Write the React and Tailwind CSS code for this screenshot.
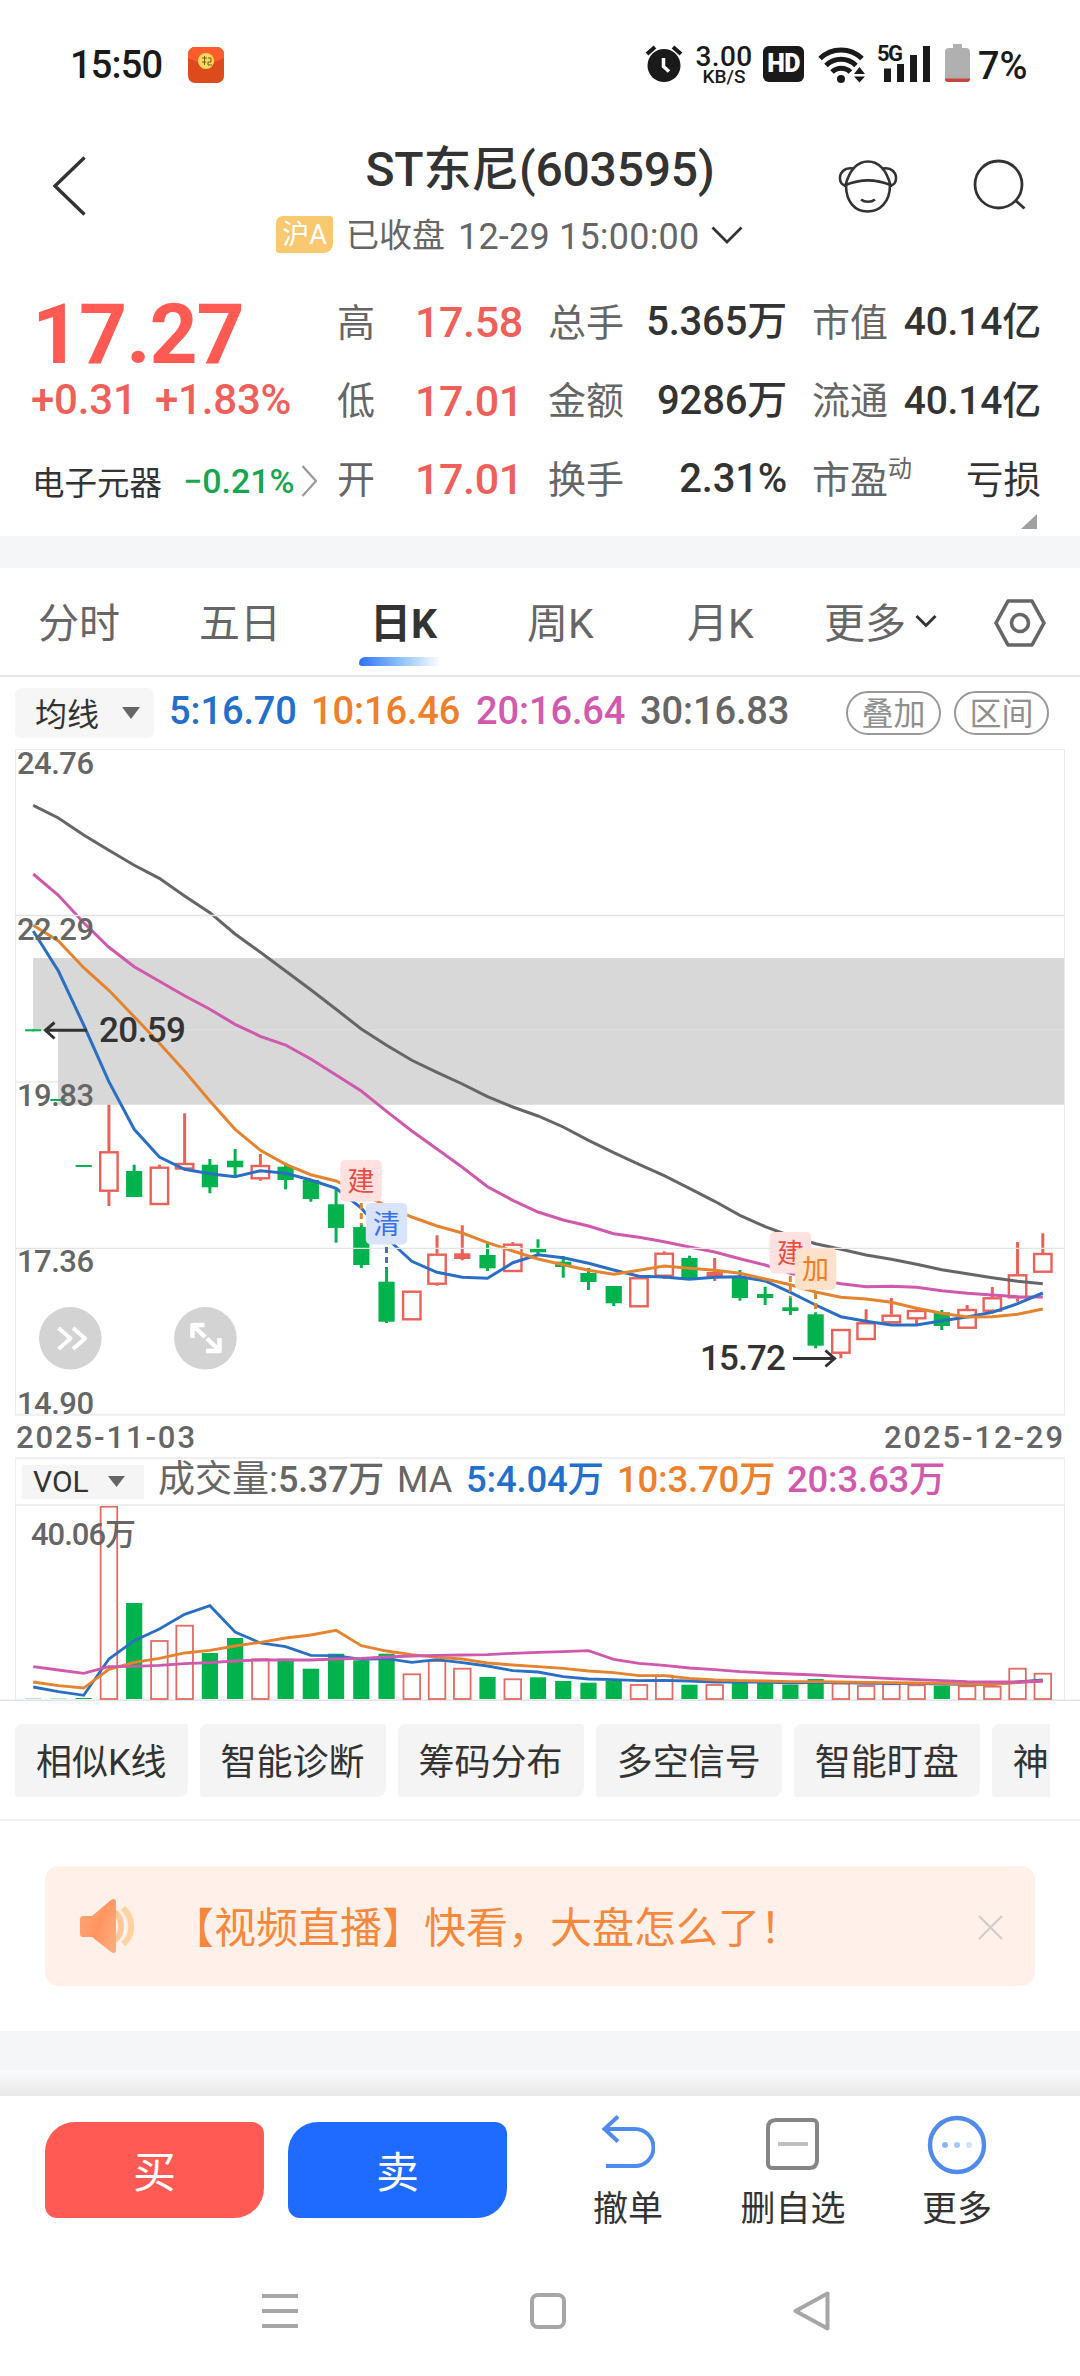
import React from 'react';

const FIRST_X = 33.2;
const STEP = 25.24;
const xAt = (i) => FIRST_X + i * STEP;

// [type, high, bodyTop, bodyBottom, low] - u: hollow red, f: solid red, d: green
const candles = [
  ['d', 1029.3, 1029.3, 1031.3, 1031.3],
  ['d', 1099, 1099, 1101, 1101],
  ['d', 1165, 1165, 1167, 1167],
  ['u', 1104.7, 1151.3, 1191.7, 1206],
  ['d', 1164.7, 1171, 1197, 1197],
  ['u', 1164.7, 1166.7, 1205, 1205],
  ['u', 1113.3, 1163, 1169.5, 1169.5],
  ['d', 1159, 1164.7, 1187.3, 1193.3],
  ['d', 1149, 1160.7, 1167.3, 1176.7],
  ['u', 1154, 1165, 1179.3, 1180.7],
  ['d', 1162.7, 1166.7, 1180, 1189.3],
  ['d', 1180, 1180, 1199, 1201.7],
  ['d', 1189.3, 1204.3, 1228, 1242.7],
  ['d', 1225, 1227, 1265, 1268],
  ['d', 1267.7, 1281.7, 1321.7, 1323],
  ['u', 1290.7, 1290.7, 1320.3, 1320.3],
  ['u', 1235.3, 1253.7, 1284.7, 1285.7],
  ['f', 1225.3, 1253.3, 1259, 1260.3],
  ['d', 1241.7, 1255, 1268.3, 1271],
  ['u', 1242, 1243.7, 1272, 1272],
  ['d', 1239.3, 1249, 1252.3, 1255],
  ['d', 1256, 1261.7, 1267, 1277.7],
  ['d', 1268, 1273, 1282, 1290],
  ['d', 1286, 1286, 1303.3, 1306],
  ['u', 1277.3, 1277.3, 1307.3, 1307.3],
  ['u', 1251.3, 1252.7, 1276.7, 1279],
  ['d', 1255.7, 1258, 1279, 1279],
  ['f', 1258, 1272, 1277, 1281],
  ['d', 1270, 1276.7, 1298, 1300.7],
  ['d', 1286.7, 1294, 1298, 1305],
  ['d', 1297.3, 1307.3, 1311, 1315],
  ['d', 1312.3, 1314.3, 1345.7, 1348.3],
  ['u', 1329, 1329, 1353.7, 1358.3],
  ['u', 1309.3, 1322.3, 1340, 1340],
  ['u', 1298, 1314.7, 1323.3, 1323.3],
  ['u', 1309, 1310, 1319.3, 1326],
  ['d', 1310, 1312.3, 1326, 1330],
  ['u', 1305, 1309, 1328.7, 1328.7],
  ['u', 1287, 1297.3, 1311.7, 1311.7],
  ['u', 1242, 1274.3, 1298.3, 1301.7],
  ['u', 1233.3, 1253, 1272.7, 1272.7],
];

const priceLines = [
  {
    color: '#666666',
    ys: [805.3, 818, 835, 850.3, 865.3, 878.3, 896, 912.7, 934, 952.3, 971, 989.7, 1009.3, 1029, 1045.3, 1060.3, 1072.3, 1084, 1096.7, 1107, 1116, 1127, 1140.3, 1152.7, 1164.3, 1175.7, 1188.3, 1201.3, 1215.3, 1226.7, 1236, 1243.7, 1249.3, 1255, 1259.3, 1264.3, 1269.7, 1273.7, 1277.7, 1281.3, 1283.7],
  },
  {
    color: '#cf59ac',
    ys: [874, 895.3, 922.7, 947.3, 966.7, 981.3, 995.7, 1009.3, 1024.3, 1036.3, 1045, 1059, 1075, 1091, 1111.3, 1131, 1149, 1167.3, 1186.7, 1200.3, 1212, 1220, 1226, 1233.7, 1237.3, 1241.7, 1247, 1252, 1258.7, 1265, 1273.3, 1279.3, 1283.7, 1286.7, 1286.3, 1287.3, 1290.7, 1293.3, 1295, 1296.7, 1297],
  },
  {
    color: '#2a6fc4',
    ys: [931, 971, 1025, 1081.7, 1129.3, 1157, 1169.3, 1173.7, 1176.7, 1170.7, 1173.3, 1180, 1188.3, 1208, 1238, 1261.3, 1272.3, 1277.3, 1278.3, 1262.7, 1254.7, 1257.7, 1263.3, 1270, 1276.3, 1277, 1279.3, 1277.3, 1276.7, 1281, 1292.3, 1305, 1316.7, 1321.3, 1325, 1325, 1320.7, 1317, 1312.3, 1303.7, 1293],
  },
  {
    color: '#e5832f',
    ys: [925.3, 941, 967.7, 990.3, 1016.7, 1043.3, 1071, 1101, 1129.3, 1150.3, 1164.3, 1174.7, 1181, 1193.3, 1206, 1217, 1226, 1233, 1242.7, 1251, 1259, 1264.7, 1270.3, 1274.3, 1270.3, 1266, 1268.3, 1270.3, 1273.3, 1279, 1284.7, 1292, 1297.3, 1299, 1302.3, 1308.3, 1313.3, 1317, 1316.7, 1314.3, 1309],
  },
];

const volumeTops = [1698.7, 1698.7, 1698, 1505.7, 1603, 1640, 1624.7, 1653, 1638, 1658.3, 1658.7, 1668.7, 1653.7, 1660.3, 1653.7, 1673.3, 1660, 1667.7, 1677, 1678.3, 1677.3, 1681, 1682.7, 1681, 1684, 1674.7, 1684.7, 1684, 1682.7, 1682.7, 1684.7, 1679, 1682.7, 1685, 1683.3, 1684.3, 1685.7, 1685.3, 1685.7, 1667.7, 1672.7];

// thirds of a pixel below y=1440
const volumeLines = [
  {
    color: '#2a6fc4',
    vs: [741, 755, 766, 657, 602, 567, 523, 497, 576, 609, 620, 646, 647, 658, 656, 667, 659, 668, 678, 692, 696, 710, 717, 719, 722, 721, 723, 726, 726, 726, 729, 727, 728, 730, 730, 730, 732, 733, 733, 726, 720],
  },
  {
    color: '#e5832f',
    vs: [726, 737, 744, 688, 667, 655, 639, 631, 618, 607, 594, 585, 571, 617, 633, 644, 652, 657, 669, 675, 680, 685, 693, 698, 707, 707, 715, 720, 722, 723, 725, 725, 726, 727, 728, 729, 730, 732, 733, 728, 723],
  },
  {
    color: '#cf59ac',
    vs: [680, 690, 700, 680, 679, 676, 671, 668, 663, 660, 660, 660, 657, 655, 651, 648, 646, 645, 644, 640, 637, 635, 632, 658, 670, 676, 684, 689, 695, 699, 702, 705, 709, 712, 716, 719, 722, 725, 726, 726, 723],
  },
];

const toPoints = (ys) => ys.map((y, i) => `${xAt(i).toFixed(1)},${y.toFixed(1)}`).join(' ');

function StatusBar() {
  return (
    <div className="flex h-[130px] items-start pt-[44px] text-[#1a1a1a]">
      <span className="ml-[70px] w-[118px] pt-[2px] text-[38px] leading-[38px] font-medium tracking-[-0.8px]">15:50</span>
      <svg className="mt-[3px] h-[36px] w-[36px]" viewBox="0 0 36 36">
        <rect width="36" height="36" rx="7" fill="#dd4a1c" />
        <path d="M0 7a7 7 0 0 1 7-7h22a7 7 0 0 1 7 7v4L18 19 0 11z" fill="#fb5c2b" />
        <circle cx="18" cy="14" r="8" fill="#f9d95c" />
        <path d="M14 11h5M16.500 9v9M14 15h4M20 11h3v4h-3v3h4" stroke="#7c5a18" strokeWidth="1" fill="none" />
      </svg>
      <svg className="ml-[421px] h-[38px] w-[38px]" viewBox="0 0 38 38">
        <circle cx="19" cy="21.500" r="16.500" fill="#1a1a1a" />
        <path d="M2 10l8-7M36 10l-8-7" stroke="#1a1a1a" strokeWidth="4" />
        <path d="M18.500 14v8.500l5.500 5" stroke="#fff" strokeWidth="3.500" fill="none" />
      </svg>
      <div className="ml-[11px] flex w-[60px] flex-col items-center">
        <span className="text-[28px] leading-[25px] font-medium tracking-[0.4px]">3.00</span>
        <span className="text-[19px] leading-[16px] font-medium">KB/S</span>
      </div>
      <div className="mt-[2px] ml-[9px] flex h-[36px] w-[41px] items-center justify-center rounded-[6px] bg-[#1a1a1a] text-[25px] font-black tracking-[-0.5px] text-white">
        HD
      </div>
      <svg className="mt-[1px] ml-[14px] h-[38px] w-[48px]" viewBox="0 0 48 38">
        <g fill="none" stroke="#1a1a1a" strokeWidth="5">
          <path d="M2 13.500a30 30 0 0 1 42 0" />
          <path d="M8 20.500a21 21 0 0 1 30 0" />
          <path d="M14 27a13 13 0 0 1 18.500 0" />
        </g>
        <circle cx="23" cy="34" r="4" fill="#1a1a1a" />
        <path d="M36 29l5.500-7 5.500 7zM36 31.500l5.500 6 5.500-6z" fill="#1a1a1a" />
      </svg>
      <div className="relative ml-[10px] h-[38px] w-[56px]">
        <span className="absolute -top-[1px] left-[1px] text-[22px] leading-[22px] font-bold tracking-[-1.5px]">5G</span>
        <svg className="h-[38px] w-[56px]" viewBox="0 0 56 38">
          <path d="M8 24.500h7V38H8zM21 20h7v18h-7zM34 11h7v27h-7zM47 2h7v36h-7z" fill="#1a1a1a" />
        </svg>
      </div>
      <svg className="ml-[13px] h-[38px] w-[25px]" viewBox="0 0 25 38">
        <path d="M8 0h9v4h4a4 4 0 0 1 4 4v27a3 3 0 0 1-3 3H3a3 3 0 0 1-3-3V8a4 4 0 0 1 4-4h4z" fill="#b0b0b0" />
        <path d="M0 34.500h25a3 3 0 0 1-3 3.500H3a3 3 0 0 1-3-3.500z" fill="#c9453d" />
      </svg>
      <span className="ml-[8px] pt-[3px] text-[38px] leading-[38px] font-medium">7%</span>
    </div>
  );
}

function Header() {
  return (
    <div className="flex h-[140px] items-start">
      <svg className="mt-[26px] ml-[53px] h-[60px] w-[34px]" viewBox="0 0 34 60" fill="none" stroke="#333" strokeWidth="3.4">
        <path d="M31.500 1.500L2 30l29.500 28.500" />
      </svg>
      <div className="ml-[189px] flex w-[480px] flex-col">
        <h1 className="h-[78px] pt-[13px] pl-[48px] text-center text-[48px] leading-[54px] font-medium tracking-[-0.2px] whitespace-nowrap text-[#333]">
          ST东尼(603595)
        </h1>
        <div className="flex h-[52px] items-center text-[#666]">
          <span className="mt-[1px] flex h-[37px] w-[57px] items-center justify-center rounded-[3px] rounded-tl-[7px] rounded-br-[9px] bg-[#f8c970] pt-[2px] text-[27px] text-white">
            沪A
          </span>
          <span className="ml-[13px] pt-[4px] text-[33px] leading-[40px]">已收盘</span>
          <span className="ml-[13px] w-[240px] pt-[5px] text-[36px] leading-[40px] tracking-[0.2px] whitespace-nowrap">12-29 15:00:00</span>
          <svg className="mt-[1px] ml-[13px] h-[18px] w-[32px]" viewBox="0 0 32 18" fill="none" stroke="#333" strokeWidth="2.8">
            <path d="M1.500 1.500L16 16 30.500 1.500" />
          </svg>
        </div>
      </div>
      <svg className="mt-[29px] ml-[82px] h-[56px] w-[60px]" viewBox="0 0 60 56" fill="none" stroke="#333" strokeWidth="2.6">
        <path d="M8 26C8 43 17 52.500 29.500 52.500S52 43 52 26" />
        <path d="M7.500 26C12 10 20 2.500 30 2.500S48 10 52.500 26C38 20 22 20 7.500 26z" />
        <path d="M15.500 9.500C6 8 1.500 14 2 20c.3 4 2.500 6 5.500 6.500M44.500 9.500C54 8 58.500 14 58 20c-.3 4-2.500 6-5.500 6.500" />
        <path d="M23 40.500c4 3 10 3 14 0" />
      </svg>
      <svg className="mt-[28px] ml-[75px] h-[56px] w-[54px]" viewBox="0 0 54 56" fill="none" stroke="#333" strokeWidth="2.8">
        <circle cx="25.500" cy="26.500" r="23.500" />
        <path d="M42 42l9.500 8.500" />
      </svg>
    </div>
  );
}

const stats = [
  ['高', '17.58', '总手', '5.365万', '市值', '40.14亿'],
  ['低', '17.01', '金额', '9286万', '流通', '40.14亿'],
  ['开', '17.01', '换手', '2.31%', '市盈', '亏损'],
];

function Quote() {
  return (
    <div className="flex h-[266px] pt-[13px]">
      <div className="flex w-[337px] flex-col">
        <span className="mt-[16px] ml-[32px] h-[82px] text-[84px] leading-[72px] font-bold tracking-[-1.1px] text-[#ff5b54]">17.27</span>
        <div className="ml-[31px] flex h-[38px] items-center text-[42px] leading-[38px] font-medium tracking-[-0.2px] text-[#f0605a]">
          <span className="w-[124px]">+0.31</span>
          <span>+1.83%</span>
        </div>
        <div className="mt-[30px] ml-[32px] flex h-[56px] items-center">
          <span className="w-[151px] pt-[15px] text-[32.500px] text-[#333]">电子元器</span>
          <span className="w-[118px] pt-[8px] text-[34px] font-medium text-[#18a650]">−0.21%</span>
          <svg className="mt-[7px] h-[32px] w-[17px]" viewBox="0 0 17 32" fill="none" stroke="#999" strokeWidth="2.2">
            <path d="M1.500 1L15 16 1.500 31" />
          </svg>
        </div>
      </div>
      <div className="flex flex-col">
        {stats.map((r) => (
          <div key={r[0]} className="flex h-[78.500px] items-center whitespace-nowrap">
            <span className="w-[78px] pt-[2px] text-[38px] text-[#666]">{r[0]}</span>
            <span className="w-[133px] text-[43px] font-medium tracking-[-0.4px] text-[#f0605a]">{r[1]}</span>
            <span className="w-[90px] pt-[2px] text-[38px] text-[#666]">{r[2]}</span>
            <span className="w-[149px] text-right text-[40px] font-medium tracking-[-0.2px] text-[#333]">{r[3]}</span>
            <span className="flex w-[108px] pt-[2px] pl-[25px] text-[38px] text-[#666]">
              {r[4]}
              {r[4] === '市盈' && <sup className="-top-[3px] pt-[6px] text-[24px] leading-[28px]">动</sup>}
            </span>
            <span className={r[5] === '亏损' ? 'w-[146px] pt-[2px] text-right text-[37.500px] text-[#333]' : 'w-[146px] text-right text-[39px] font-medium tracking-[-0.2px] text-[#333]'}>
              {r[5]}
            </span>
          </div>
        ))}
        <svg className="-mt-[5px] mr-[4px] h-[15px] w-[16px] self-end" viewBox="0 0 16 15">
          <path d="M16 0v15H0z" fill="#a0a0a0" />
        </svg>
      </div>
    </div>
  );
}

function Tabs() {
  return (
    <div className="flex h-[108px] items-start border-b-2 border-[#e6e6e6] pt-[25px] text-[41px] leading-[60px] whitespace-nowrap text-[#666]">
      <span className="ml-[38px] w-[161px]">分时</span>
      <span className="w-[171px]">五日</span>
      <div className="flex w-[157px] flex-col">
        <span className="font-bold text-[#333]">日K</span>
        <div className="-ml-[11px] mt-[3px] h-[9px] w-[82px] rounded-tl-[6px] rounded-bl-[3px] bg-linear-to-r from-[#2f6ff5] via-[#8ec0fb] to-white" />
      </div>
      <span className="w-[160px]">周K</span>
      <span className="w-[137px]">月K</span>
      <span className="w-[91px]">更多</span>
      <svg className="mt-[20px] h-[15px] w-[22px]" viewBox="0 0 22 15" fill="none" stroke="#333" strokeWidth="3">
        <path d="M1.500 2L11 11.500 20.500 2" />
      </svg>
      <svg className="mt-[5px] ml-[57px] h-[48px] w-[52px]" viewBox="0 0 52 48" fill="none" stroke="#666" strokeWidth="3.6">
        <path d="M14 2h24l12 22-12 22H14L2 24z" strokeLinejoin="round" />
        <circle cx="26" cy="24" r="8.500" />
      </svg>
    </div>
  );
}

function AverageRow() {
  return (
    <div className="flex h-[72px] items-start pt-[11px] whitespace-nowrap">
      <div className="ml-[15px] flex h-[50px] w-[139px] items-center rounded-[6px] bg-[#f6f6f6] pl-[20px] text-[32px] text-[#333]">
        <span className="pt-[3px]">均线</span>
        <svg className="ml-[23px] h-[12px] w-[18px]" viewBox="0 0 18 12">
          <path d="M0 0h18L9 12z" fill="#666" />
        </svg>
      </div>
      <div className="ml-[15px] flex h-[47px] items-center text-[38px] font-medium tracking-[-0.1px]">
        <span className="w-[142px] text-[#2370cc]">5:16.70</span>
        <span className="w-[165px] text-[#ee802c]">10:16.46</span>
        <span className="w-[164px] text-[#d25aae]">20:16.64</span>
        <span className="w-[206px] text-[#666]">30:16.83</span>
      </div>
      <div className="mt-[3px] flex gap-[13px] text-[32px] text-[#8f8f8f]">
        <span className="flex h-[44px] w-[95px] items-center justify-center rounded-full border-2 border-[#999] pt-[2px]">叠加</span>
        <span className="flex h-[44px] w-[95px] items-center justify-center rounded-full border-2 border-[#999] pt-[2px]">区间</span>
      </div>
    </div>
  );
}

function Candle({ i, c }) {
  const [type, high, top, bottom, low] = c;
  const x = xAt(i);
  const color = type === 'd' ? '#00b34c' : '#ea6158';
  if (type === 'u') {
    return (
      <g stroke={color} fill="none">
        <path d={`M${x} ${high}V${top}M${x} ${bottom}V${low}`} strokeWidth="3" />
        <rect x={x - 8.7} y={top + 1} width="17.4" height={bottom - top - 2} strokeWidth="2.4" />
      </g>
    );
  }
  return (
    <g fill={color}>
      <rect x={x - 1.5} y={high} width="3" height={low - high} />
      <rect x={x - 8.1} y={top} width="16.2" height={bottom - top} />
    </g>
  );
}

function Tag({ x, y, bg, color, children }) {
  return (
    <g>
      <rect x={x} y={y} width="41.5" height="41.5" rx="5" fill={bg} />
      <text x={x + 20.7} y={y + 31} fontSize="27" textAnchor="middle" fill={color}>{children}</text>
    </g>
  );
}

function PriceChart() {
  return (
    <svg className="block h-[708px] w-[1080px] overflow-visible" viewBox="0 749 1080 708">
      <path d="M33.200 958H1064.500V1104.700H58V1030H33.200z" fill="#d8d8d8" />
      <path d="M58 1030H1064" stroke="#dfdfdf" strokeWidth="1" />
      <path d="M15 1082H58" stroke="#f0f0f0" strokeWidth="2" />
      <path d="M15.500 1415V749.500H1064.500V1415" fill="none" stroke="#ececec" strokeWidth="1" />
      {candles.map((c, i) => <Candle key={i} i={i} c={c} />)}
      {priceLines.map((l) => (
        <polyline key={l.color} points={toPoints(l.ys)} fill="none" stroke={l.color} strokeWidth="3" />
      ))}
      <path d="M15 915.500H1064M15 1248.300H1064" stroke="#e4e4e4" strokeWidth="1.3" />
      <path d="M15 1414.700H1065" stroke="#eeeeee" strokeWidth="2" />
      <g stroke="#333" strokeWidth="3" fill="none">
        <path d="M87 1030.300H45M54.500 1022.500L45.500 1030.300L54.500 1038.500" />
        <path d="M793 1358.500H835M825.500 1350.500L834.500 1358.500L825.500 1366.500" />
      </g>
      <g strokeWidth="3" strokeDasharray="6 4">
        <path d="M361.300 1203V1225M790.300 1276V1297M815.600 1293V1313" stroke="#d9862f" />
        <path d="M386.500 1247V1269" stroke="#4a6fb8" />
      </g>
      <g fontSize="31" fontWeight="500" fill="#666">
        <text x="17" y="774" textLength="77">24.76</text>
        <text x="17" y="939.500" textLength="77">22.29</text>
        <text x="17" y="1106" textLength="77">19.83</text>
        <text x="17" y="1272" textLength="77">17.36</text>
        <text x="17" y="1414" textLength="77">14.90</text>
        <text x="16" y="1448" textLength="179">2025-11-03</text>
        <text x="884" y="1448" textLength="179">2025-12-29</text>
      </g>
      <g fontSize="35" fontWeight="500" fill="#333">
        <text x="99" y="1041.500" textLength="87">20.59</text>
        <text x="700" y="1369.500" textLength="86">15.72</text>
      </g>
      <Tag x={340.3} y={1160} bg="#fee1e0" color="#ea4d44">建</Tag>
      <Tag x={365.800} y={1203} bg="#d9e3fc" color="#3470ea">清</Tag>
      <Tag x={769.700} y={1232} bg="#fee1e0" color="#ea4d44">建</Tag>
      <Tag x={794.800} y={1248.200} bg="#fde1ca" color="#f07d22">加</Tag>
      <g fill="#d3d3d3">
        <circle cx="70.300" cy="1338.300" r="31.300" />
        <circle cx="205.400" cy="1338.300" r="31.300" />
      </g>
      <g stroke="#fff" strokeWidth="4" fill="none" strokeLinejoin="round">
        <path d="M58.500 1328l12 10.500-12 10.500M73 1328l12 10.500-12 10.500" />
        <path d="M192.500 1338v-13h12M192.500 1325l12.500 12M207 1338.500l12.500 12M219.500 1338v13H206" strokeWidth="4.500" />
      </g>
    </svg>
  );
}

function VolumeChart() {
  return (
    <>
      <div className="mx-[15px] flex h-[49px] items-center border-x border-y-2 border-[#efefef] pl-[6px] text-[37px] leading-[44px] whitespace-nowrap text-[#666]">
        <div className="flex h-[34px] w-[122px] items-center bg-[#f5f5f5] pl-[11px] text-[30px] text-[#333]">
          <span className="w-[75px]">VOL</span>
          <svg className="h-[11px] w-[17px]" viewBox="0 0 17 11">
            <path d="M0 0h17L8.500 11z" fill="#666" />
          </svg>
        </div>
        <span className="ml-[14px] w-[239px] pb-[3px]">
          成交量:<span className="text-[36px] font-medium tracking-[-0.3px]">5.37万</span>
        </span>
        <span className="w-[69px] pb-[3px] text-[36px]">MA</span>
        <span className="w-[151px] pb-[3px] text-[36.500px] font-medium tracking-[-0.2px] text-[#2370cc]">5:4.04万</span>
        <span className="w-[170px] pb-[3px] text-[36.500px] font-medium tracking-[-0.2px] text-[#ee802c]">10:3.70万</span>
        <span className="pb-[3px] text-[36.500px] font-medium tracking-[-0.2px] text-[#d25aae]">20:3.63万</span>
      </div>
      <svg className="block h-[195px] w-[1080px]" viewBox="0 1506 1080 195">
        <path d="M15.500 1506V1700M1064.500 1506V1700" stroke="#ececec" />
        <path d="M0 1700.300H1080" stroke="#e4e4e4" strokeWidth="1.500" />
        {volumeTops.map((top, i) =>
          candles[i][0] === 'd' ? (
            <rect key={i} x={xAt(i) - 8.1} y={top} width="16.2" height={1699 - top} fill="#00b34c" />
          ) : (
            <rect key={i} x={xAt(i) - 8.3} y={top + 1} width="16.6" height={1698 - top} fill="none" stroke="#e26b63" strokeWidth="1.8" />
          )
        )}
        {volumeLines.map((l) => (
          <polyline key={l.color} points={toPoints(l.vs.map((v) => 1440 + v / 3))} fill="none" stroke={l.color} strokeWidth="2.8" />
        ))}
        <text x="31" y="1545" fontSize="31" fontWeight="500" fill="#666" textLength="105">40.06万</text>
      </svg>
    </>
  );
}

const tools = ['相似K线', '智能诊断', '筹码分布', '多空信号', '智能盯盘', '神奇九转'];

function ToolChips() {
  return (
    <div className="h-[120px] border-b-2 border-[#f2f2f2] pt-[23px] pr-[30px] pl-[15px]">
      <div className="flex gap-[12px] overflow-hidden text-[36px] leading-[73px] whitespace-nowrap text-[#333]">
        {tools.map((t) => (
          <span key={t} className="h-[73px] shrink-0 rounded-[3px] rounded-tl-[7px] rounded-br-[9px] bg-[#f4f4f4] px-[21px] pt-[3px]">{t}</span>
        ))}
      </div>
    </div>
  );
}

function Banner() {
  return (
    <div className="h-[210px] px-[45px] pt-[45px]">
      <div className="flex h-[120px] items-center rounded-[14px] bg-[#fff1e9]">
        <svg className="ml-[34px] h-[56px] w-[58px]" viewBox="0 0 58 56">
          <defs>
            <linearGradient id="horn" x1="0" y1="0" x2="1" y2="0.6">
              <stop offset="0" stopColor="#ffa878" />
              <stop offset="0.6" stopColor="#ff9560" />
              <stop offset="1" stopColor="#ffa878" />
            </linearGradient>
          </defs>
          <path d="M36 14c8 7 8 21 0 28" stroke="#ffc79a" strokeWidth="6" fill="none" />
          <path d="M44 10c11 10 11 27 0 36" stroke="#ffd3a1" strokeWidth="6" fill="none" />
          <path d="M4 18h9L32 2c3-2 5-1 5 2v48c0 3-2 4-5 2L13 39H4c-2 0-3-1-3-3V21c0-2 1-3 3-3z" fill="url(#horn)" />
        </svg>
        <span className="ml-[35px] pt-[5px] text-[42px] text-[#f5883c]">【视频直播】快看，大盘怎么了！</span>
        <svg className="mt-[2px] mr-[32px] ml-auto h-[25px] w-[25px]" viewBox="0 0 25 25" stroke="#d0cdca" strokeWidth="2.2">
          <path d="M1 1l23 23M24 1L1 24" />
        </svg>
      </div>
    </div>
  );
}

function BottomBar() {
  return (
    <div className="flex h-[144px] items-start pt-[26px] text-[35px] leading-[42px] text-[#333]">
      <button className="ml-[45px] h-[96px] w-[219px] rounded-[12px] rounded-tl-[30px] rounded-br-[30px] bg-[#ff5b54] pt-[5px] text-[43px] text-white">买</button>
      <button className="ml-[24px] h-[96px] w-[219px] rounded-[12px] rounded-tl-[30px] rounded-br-[30px] bg-[#1f6bff] pt-[5px] text-[43px] text-white">卖</button>
      <div className="-mt-[9px] ml-[71px] flex w-[100px] flex-col items-center">
        <svg className="h-[62px] w-[54px]" viewBox="0 0 54 62" fill="none" stroke="#4f8aec" strokeWidth="4">
          <path d="M17 3.500L3.500 16 17 28.500M4 16h30a18.500 18.500 0 0 1 0 37H5" />
        </svg>
        <span className="mt-[14px]">撤单</span>
      </div>
      <div className="-mt-[9px] ml-[50px] flex w-[130px] flex-col items-center">
        <svg className="h-[62px] w-[54px]" viewBox="0 0 54 62" fill="none" stroke="#868686" strokeWidth="4">
          <path d="M10 7h37a4 4 0 0 1 4 4v36q0 8-8 8H6a4 4 0 0 1-4-4V15q0-8 8-8z" />
          <path d="M12 31h30" stroke="#c0c0c0" />
        </svg>
        <span className="mt-[14px]">删自选</span>
      </div>
      <div className="-mt-[9px] ml-[49px] flex w-[100px] flex-col items-center">
        <svg className="h-[62px] w-[60px]" viewBox="0 0 60 62">
          <circle cx="30" cy="32" r="27" fill="none" stroke="#4f8aec" strokeWidth="4.400" />
          <circle cx="18" cy="32" r="3" fill="#8fb6f3" />
          <circle cx="30" cy="32" r="3" fill="#a9c8f6" />
          <circle cx="42" cy="32" r="3" fill="#cfe1fb" />
        </svg>
        <span className="mt-[14px]">更多</span>
      </div>
    </div>
  );
}

function SystemNav() {
  return (
    <div className="flex h-[136px] items-center pt-[5px]">
      <svg className="ml-[261px] h-[40px] w-[38px]" viewBox="0 0 38 40" stroke="#a6a6a6" strokeWidth="4">
        <path d="M1 5h36M1 20h36M1 35h36" />
      </svg>
      <svg className="ml-[230px] h-[40px] w-[38px]" viewBox="0 0 38 40" fill="none" stroke="#a6a6a6" strokeWidth="4">
        <rect x="3" y="4" width="32" height="32" rx="6" />
      </svg>
      <svg className="ml-[225px] h-[42px] w-[40px]" viewBox="0 0 40 42" fill="none" stroke="#a6a6a6" strokeWidth="4" strokeLinejoin="round">
        <path d="M35.500 3.500v35L3.500 21z" />
      </svg>
    </div>
  );
}

export default function App() {
  return (
    <main className="h-[2376px] w-[1080px] overflow-hidden bg-white font-[Roboto,'Noto_Sans_CJK_SC',sans-serif]">
      <StatusBar />
      <Header />
      <Quote />
      <div className="h-[32px] bg-[#f5f6f8]" />
      <div className="h-px" />
      <Tabs />
      <AverageRow />
      <PriceChart />
      <VolumeChart />
      <ToolChips />
      <Banner />
      <div className="h-[39px] bg-[#f5f6f8]" />
      <div className="h-[26px] bg-linear-to-b from-[#fcfcfc] to-[#e8e8e8]" />
      <BottomBar />
      <SystemNav />
    </main>
  );
}
